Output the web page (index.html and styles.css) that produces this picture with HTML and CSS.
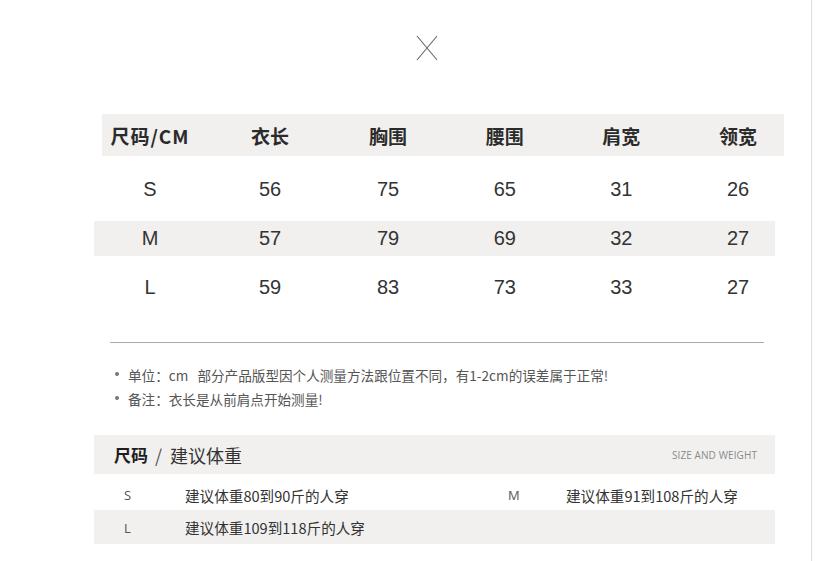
FILE: index.html
```html
<!DOCTYPE html>
<html lang="zh-CN">
<head>
<meta charset="utf-8">
<title>尺码表</title>
<link rel="stylesheet" href="styles.css">
</head>
<body>
<div class="page">
  <div class="close-row">
    <svg class="close-icon" width="22" height="26" viewBox="0 0 22 26" aria-hidden="true">
      <path d="M1 1 L21 25 M21 1 L1 25" stroke="#666" stroke-width="1.1" fill="none"/>
    </svg>
  </div>

  <div class="size-table">
    <div class="thead">
      <div class="cell first">尺码/CM</div>
      <div class="cell">衣长</div>
      <div class="cell">胸围</div>
      <div class="cell">腰围</div>
      <div class="cell">肩宽</div>
      <div class="cell last">领宽</div>
    </div>
    <div class="trow">
      <div class="cell first">S</div>
      <div class="cell">56</div>
      <div class="cell">75</div>
      <div class="cell">65</div>
      <div class="cell">31</div>
      <div class="cell last">26</div>
    </div>
    <div class="trow shaded">
      <div class="cell first">M</div>
      <div class="cell">57</div>
      <div class="cell">79</div>
      <div class="cell">69</div>
      <div class="cell">32</div>
      <div class="cell last">27</div>
    </div>
    <div class="trow">
      <div class="cell first">L</div>
      <div class="cell">59</div>
      <div class="cell">83</div>
      <div class="cell">73</div>
      <div class="cell">33</div>
      <div class="cell last">27</div>
    </div>
  </div>

  <div class="divider"></div>

  <ul class="notes">
    <li>单位：cm&nbsp;&nbsp;&nbsp;部分产品版型因个人测量方法跟位置不同，有1-2cm的误差属于正常!</li>
    <li>备注：衣长是从前肩点开始测量!</li>
  </ul>

  <div class="weight">
    <div class="weight-head">
      <div class="weight-title"><b>尺码</b><span class="slash">/</span>建议体重</div>
      <div class="weight-en">SIZE AND WEIGHT</div>
    </div>
    <div class="wrow first-row">
      <span class="wsize">S</span>
      <span class="wtext">建议体重80到90斤的人穿</span>
      <span class="wsize">M</span>
      <span class="wtext">建议体重91到108斤的人穿</span>
    </div>
    <div class="wrow shaded short">
      <span class="wsize">L</span>
      <span class="wtext">建议体重109到118斤的人穿</span>
    </div>
  </div>
</div>
</body>
</html>
```

FILE: styles.css
```css
html, body {
  margin: 0;
  padding: 0;
  background: #fff;
}

body {
  font-family: "Liberation Sans", "Noto Sans CJK SC", sans-serif;
  color: #333;
}

.page {
  width: 811px;
  height: 561px;
  border-right: 1px solid #dedede;
  overflow: hidden;
}

.close-row {
  padding-top: 35px;
  padding-left: 416px;
  height: 26px;
}

.close-icon {
  display: block;
}

.size-table {
  margin-top: 53px;
}

.thead {
  margin-left: 102px;
  width: 682px;
  height: 42px;
  background: #f1f0ee;
  display: grid;
  grid-template-columns: 108.5px 119px 117px 116.5px 116.5px 1fr;
  align-items: center;
  font-family: "Noto Sans CJK SC", "Liberation Sans", sans-serif;
  font-weight: 700;
  font-size: 19px;
  color: #2b2b2b;
}

.thead .cell {
  text-align: center;
}

.thead .first {
  padding-right: 12.5px;
  letter-spacing: 1px;
}

.thead .last {
  padding-left: 12.5px;
}

.trow {
  margin-left: 94px;
  width: 681px;
  height: 35px;
  margin-top: 14px;
  display: grid;
  grid-template-columns: 116.5px 119px 117px 116.5px 116.5px 1fr;
  align-items: center;
  font-size: 20px;
  color: #333;
}

.size-table .thead + .trow {
  margin-top: 16px;
}

.trow .cell {
  text-align: center;
}

.trow .first {
  padding-right: 4.5px;
}

.trow .last {
  padding-left: 21.5px;
}

.shaded {
  background: #f1f0ee;
}

.divider {
  margin-top: 37px;
  margin-left: 110px;
  width: 654px;
  height: 1px;
  background: #aaaaaa;
}

.notes {
  list-style: none;
  margin: 20px 0 0 0;
  padding: 0 0 0 115px;
  font-family: "Noto Sans CJK SC", "Liberation Sans", sans-serif;
  font-size: 13.6px;
  line-height: 24px;
  color: #555;
}

.notes li {
  display: flex;
  align-items: center;
  gap: 9px;
}

.notes li::before {
  content: "";
  flex: none;
  width: 4px;
  height: 4px;
  border-radius: 50%;
  background: #777;
  margin-top: -3px;
}

.weight {
  margin-top: 24px;
  margin-left: 94px;
  width: 681px;
}

.weight-head {
  height: 39px;
  background: #f1f0ee;
  display: flex;
  align-items: center;
  justify-content: space-between;
  padding: 0 18px 0 20px;
}

.weight-title {
  font-family: "Noto Sans CJK SC", sans-serif;
  font-size: 18px;
  color: #333;
  display: flex;
  align-items: center;
}

.weight-title b {
  font-size: 17px;
  font-weight: 700;
  color: #1e1e1e;
}

.slash {
  color: #555;
  margin: 0 8px 0 7px;
}

.weight-en {
  font-family: "Open Sans", "Liberation Sans", sans-serif;
  font-size: 10px;
  color: #8a8a8a;
  letter-spacing: 0.1px;
}

.wrow {
  height: 36px;
  display: grid;
  grid-template-columns: 61px 323px 58px 1fr;
  align-items: center;
  padding-left: 30px;
  font-family: "Noto Sans CJK SC", sans-serif;
  font-size: 14.6px;
  color: #333;
  box-sizing: border-box;
}

.wrow.first-row {
  padding-top: 6px;
}

.wrow.short {
  height: 34px;
  padding-top: 1px;
}

.wsize {
  font-family: "Open Sans", "Liberation Sans", sans-serif;
  font-size: 13px;
  color: #555;
}
```
